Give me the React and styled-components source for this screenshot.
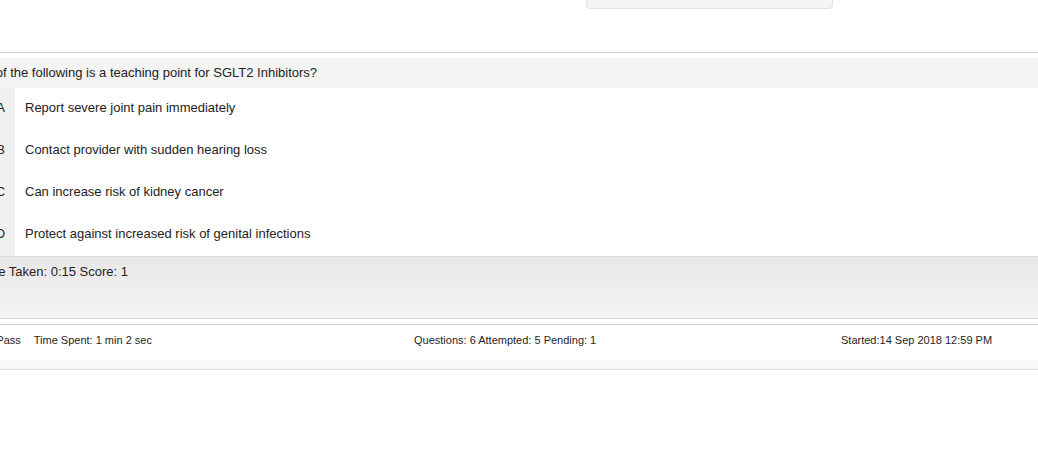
import React from 'react';
import styled, { createGlobalStyle } from 'styled-components';

const GlobalStyle = createGlobalStyle`
  html, body {
    margin: 0;
    padding: 0;
    background: #fff;
    overflow: hidden;
  }
  body {
    font-family: "Liberation Sans", Arial, sans-serif;
    color: #222;
  }
`;

// the page is scrolled a little to the right, so the left edge is cut off
const Page = styled.div`
  margin-left: -60px;
  width: calc(100% + 60px);
`;

const Header = styled.header`
  display: flex;
  align-items: flex-start;
  height: 53px;
  box-sizing: border-box;
  border-bottom: 1px solid #cfcfcf;
`;

const TimerBox = styled.div`
  margin: -23px 0 0 646px;
  width: 247px;
  height: 32px;
  box-sizing: border-box;
  padding-top: 2px;
  background: #f5f5f5;
  border: 1px solid #dde2e8;
  border-radius: 4px;
  font-size: 13px;
  line-height: 26px;
  text-align: center;
`;

const Question = styled.div`
  margin-top: 5px;
  height: 30px;
  line-height: 30px;
  padding-left: 16px;
  background: #f4f4f4;
  font-size: 13px;
  color: #222;
`;

const Options = styled.ul`
  list-style: none;
  margin: 0;
  padding: 0;
`;

const OptionRow = styled.li`
  display: flex;
  height: 42px;
  font-size: 13px;
`;

const Letter = styled.span`
  margin-left: 46px;
  width: 29px;
  background: #f0f0f0;
  display: flex;
  align-items: center;
  justify-content: center;
  padding-bottom: 4px;
  box-sizing: border-box;
`;

const OptionText = styled.span`
  display: flex;
  align-items: center;
  padding: 0 0 4px 10px;
`;

const Feedback = styled.div`
  height: 63px;
  box-sizing: border-box;
  border-top: 1px solid #d8d8d8;
  border-bottom: 1px solid #dcdcdc;
  background: linear-gradient(to bottom, #e7e7e7, #f4f4f4);
  padding: 7px 0 0 37px;
  font-size: 13px;
  line-height: 16px;
`;

const Footer = styled.footer`
  margin-top: 5px;
  border-top: 1px solid #d0d0d0;
  border-bottom: 1px solid #dcdcdc;
  background: #f8f8f8;
`;

const FooterRow = styled.div`
  display: grid;
  grid-template-columns: 455px 427px 1fr;
  height: 35px;
  box-sizing: border-box;
  padding: 9px 0 0 19px;
  margin-bottom: 9px;
  background: #fff;
  font-size: 11px;
  line-height: 13px;
  color: #1e1e1e;
`;

const Stat = styled.span`
  margin-right: ${(p) => p.gap || 0}px;
`;

const options = [
  ['A', 'Report severe joint pain immediately'],
  ['B', 'Contact provider with sudden hearing loss'],
  ['C', 'Can increase risk of kidney cancer'],
  ['D', 'Protect against increased risk of genital infections'],
];

const App = () => {
  return (
    <>
      <GlobalStyle />
      <Page>
        <Header>
          <TimerBox>Time Left (04:45)</TimerBox>
        </Header>
        <Question>
          Which of the following is a teaching point for SGLT2 Inhibitors?
        </Question>
        <Options>
          {options.map(([key, text]) => (
            <OptionRow key={key}>
              <Letter>{key}</Letter>
              <OptionText>{text}</OptionText>
            </OptionRow>
          ))}
        </Options>
        <Feedback>Time Taken: 0:15 Score: 1</Feedback>
        <Footer>
          <FooterRow>
            <div>
              <Stat gap={13}>Result: Pass</Stat>
              <Stat>Time Spent: 1 min 2 sec</Stat>
            </div>
            <div>Questions: 6 Attempted: 5 Pending: 1</div>
            <div>Started:14 Sep 2018 12:59 PM</div>
          </FooterRow>
        </Footer>
      </Page>
    </>
  );
};

export default App;
